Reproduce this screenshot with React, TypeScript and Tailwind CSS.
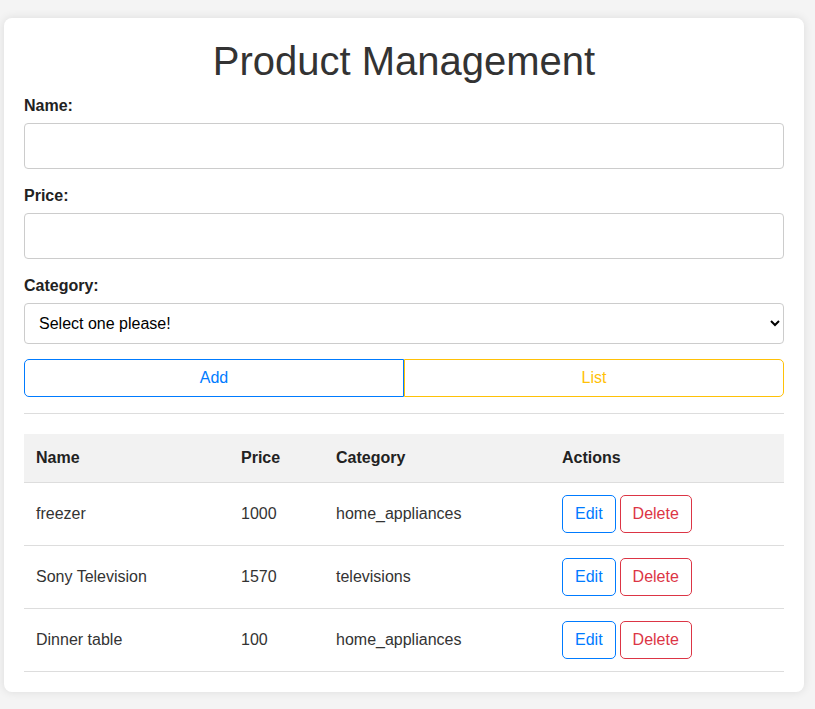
import { useState } from "react";

const products = [
  { name: "freezer", price: 1000, category: "home_appliances" },
  { name: "Sony Television", price: 1570, category: "televisions" },
  { name: "Dinner table", price: 100, category: "home_appliances" },
];

export default function App() {
  const [name, setName] = useState("");
  const [price, setPrice] = useState("");
  const [category, setCategory] = useState("");

  return (
    <div className="min-h-[709px] bg-[#f4f4f4] pt-[18px] pl-[4px] font-['Liberation_Sans',Arial,sans-serif] text-[#333]">
      <div className="w-[800px] rounded-lg bg-white p-5 shadow-[0_0_10px_rgba(0,0,0,0.1)]">
        <h1 className="text-center text-[40px] leading-[46px] font-normal">Product Management</h1>

        {/* Form */}
        <div className="mt-[13px]">
          <label className="mb-[8px] block text-base leading-[18px] font-bold text-[#222]">Name:</label>
          <input
            value={name}
            onChange={(e) => setName(e.target.value)}
            className="block h-[46px] w-full rounded border border-[#ccc] px-3 text-base outline-none"
          />

          <label className="mt-[18px] mb-[8px] block text-base leading-[18px] font-bold text-[#222]">Price:</label>
          <input
            value={price}
            onChange={(e) => setPrice(e.target.value)}
            className="block h-[46px] w-full rounded border border-[#ccc] px-3 text-base outline-none"
          />

          <label className="mt-[18px] mb-[8px] block text-base leading-[18px] font-bold text-[#222]">Category:</label>
          <select
            value={category}
            onChange={(e) => setCategory(e.target.value)}
            className="block h-[41px] w-full rounded border border-[#ccc] bg-white pl-[10px] pr-2 text-base text-black outline-none"
          >
            <option value="">Select one please!</option>
            <option value="home_appliances">home_appliances</option>
            <option value="televisions">televisions</option>
          </select>

          <div className="mt-[15px] flex">
            <button className="h-[38px] flex-1 rounded-l-[5px] border border-[#007bff] bg-white text-base text-[#007bff]">
              Add
            </button>
            <button className="h-[38px] flex-1 rounded-r-[5px] border border-[#ffc107] bg-white text-base text-[#ffc107]">
              List
            </button>
          </div>
        </div>

        <hr className="mt-4 mb-5 border-t border-[#ddd]" />

        {/* Table */}
        <table className="w-full border-collapse text-left text-base">
          <thead>
            <tr className="h-[48px] border-b border-[#ddd] bg-[#f2f2f2]">
              <th className="w-[205px] px-3 font-bold text-[#222]">Name</th>
              <th className="w-[95px] px-3 font-bold text-[#222]">Price</th>
              <th className="w-[226px] px-3 font-bold text-[#222]">Category</th>
              <th className="px-3 font-bold text-[#222]">Actions</th>
            </tr>
          </thead>
          <tbody>
            {products.map((p) => (
              <tr key={p.name} className="h-[63px] border-b border-[#ddd]">
                <td className="px-3">{p.name}</td>
                <td className="px-3">{p.price}</td>
                <td className="px-3">{p.category}</td>
                <td className="px-3">
                  <div className="flex gap-1">
                    <button className="h-[38px] rounded-[5px] border border-[#007bff] bg-white px-3 text-base text-[#007bff]">
                      Edit
                    </button>
                    <button className="h-[38px] rounded-[5px] border border-[#dc3545] bg-white px-3 text-base text-[#dc3545]">
                      Delete
                    </button>
                  </div>
                </td>
              </tr>
            ))}
          </tbody>
        </table>
      </div>
    </div>
  );
}
